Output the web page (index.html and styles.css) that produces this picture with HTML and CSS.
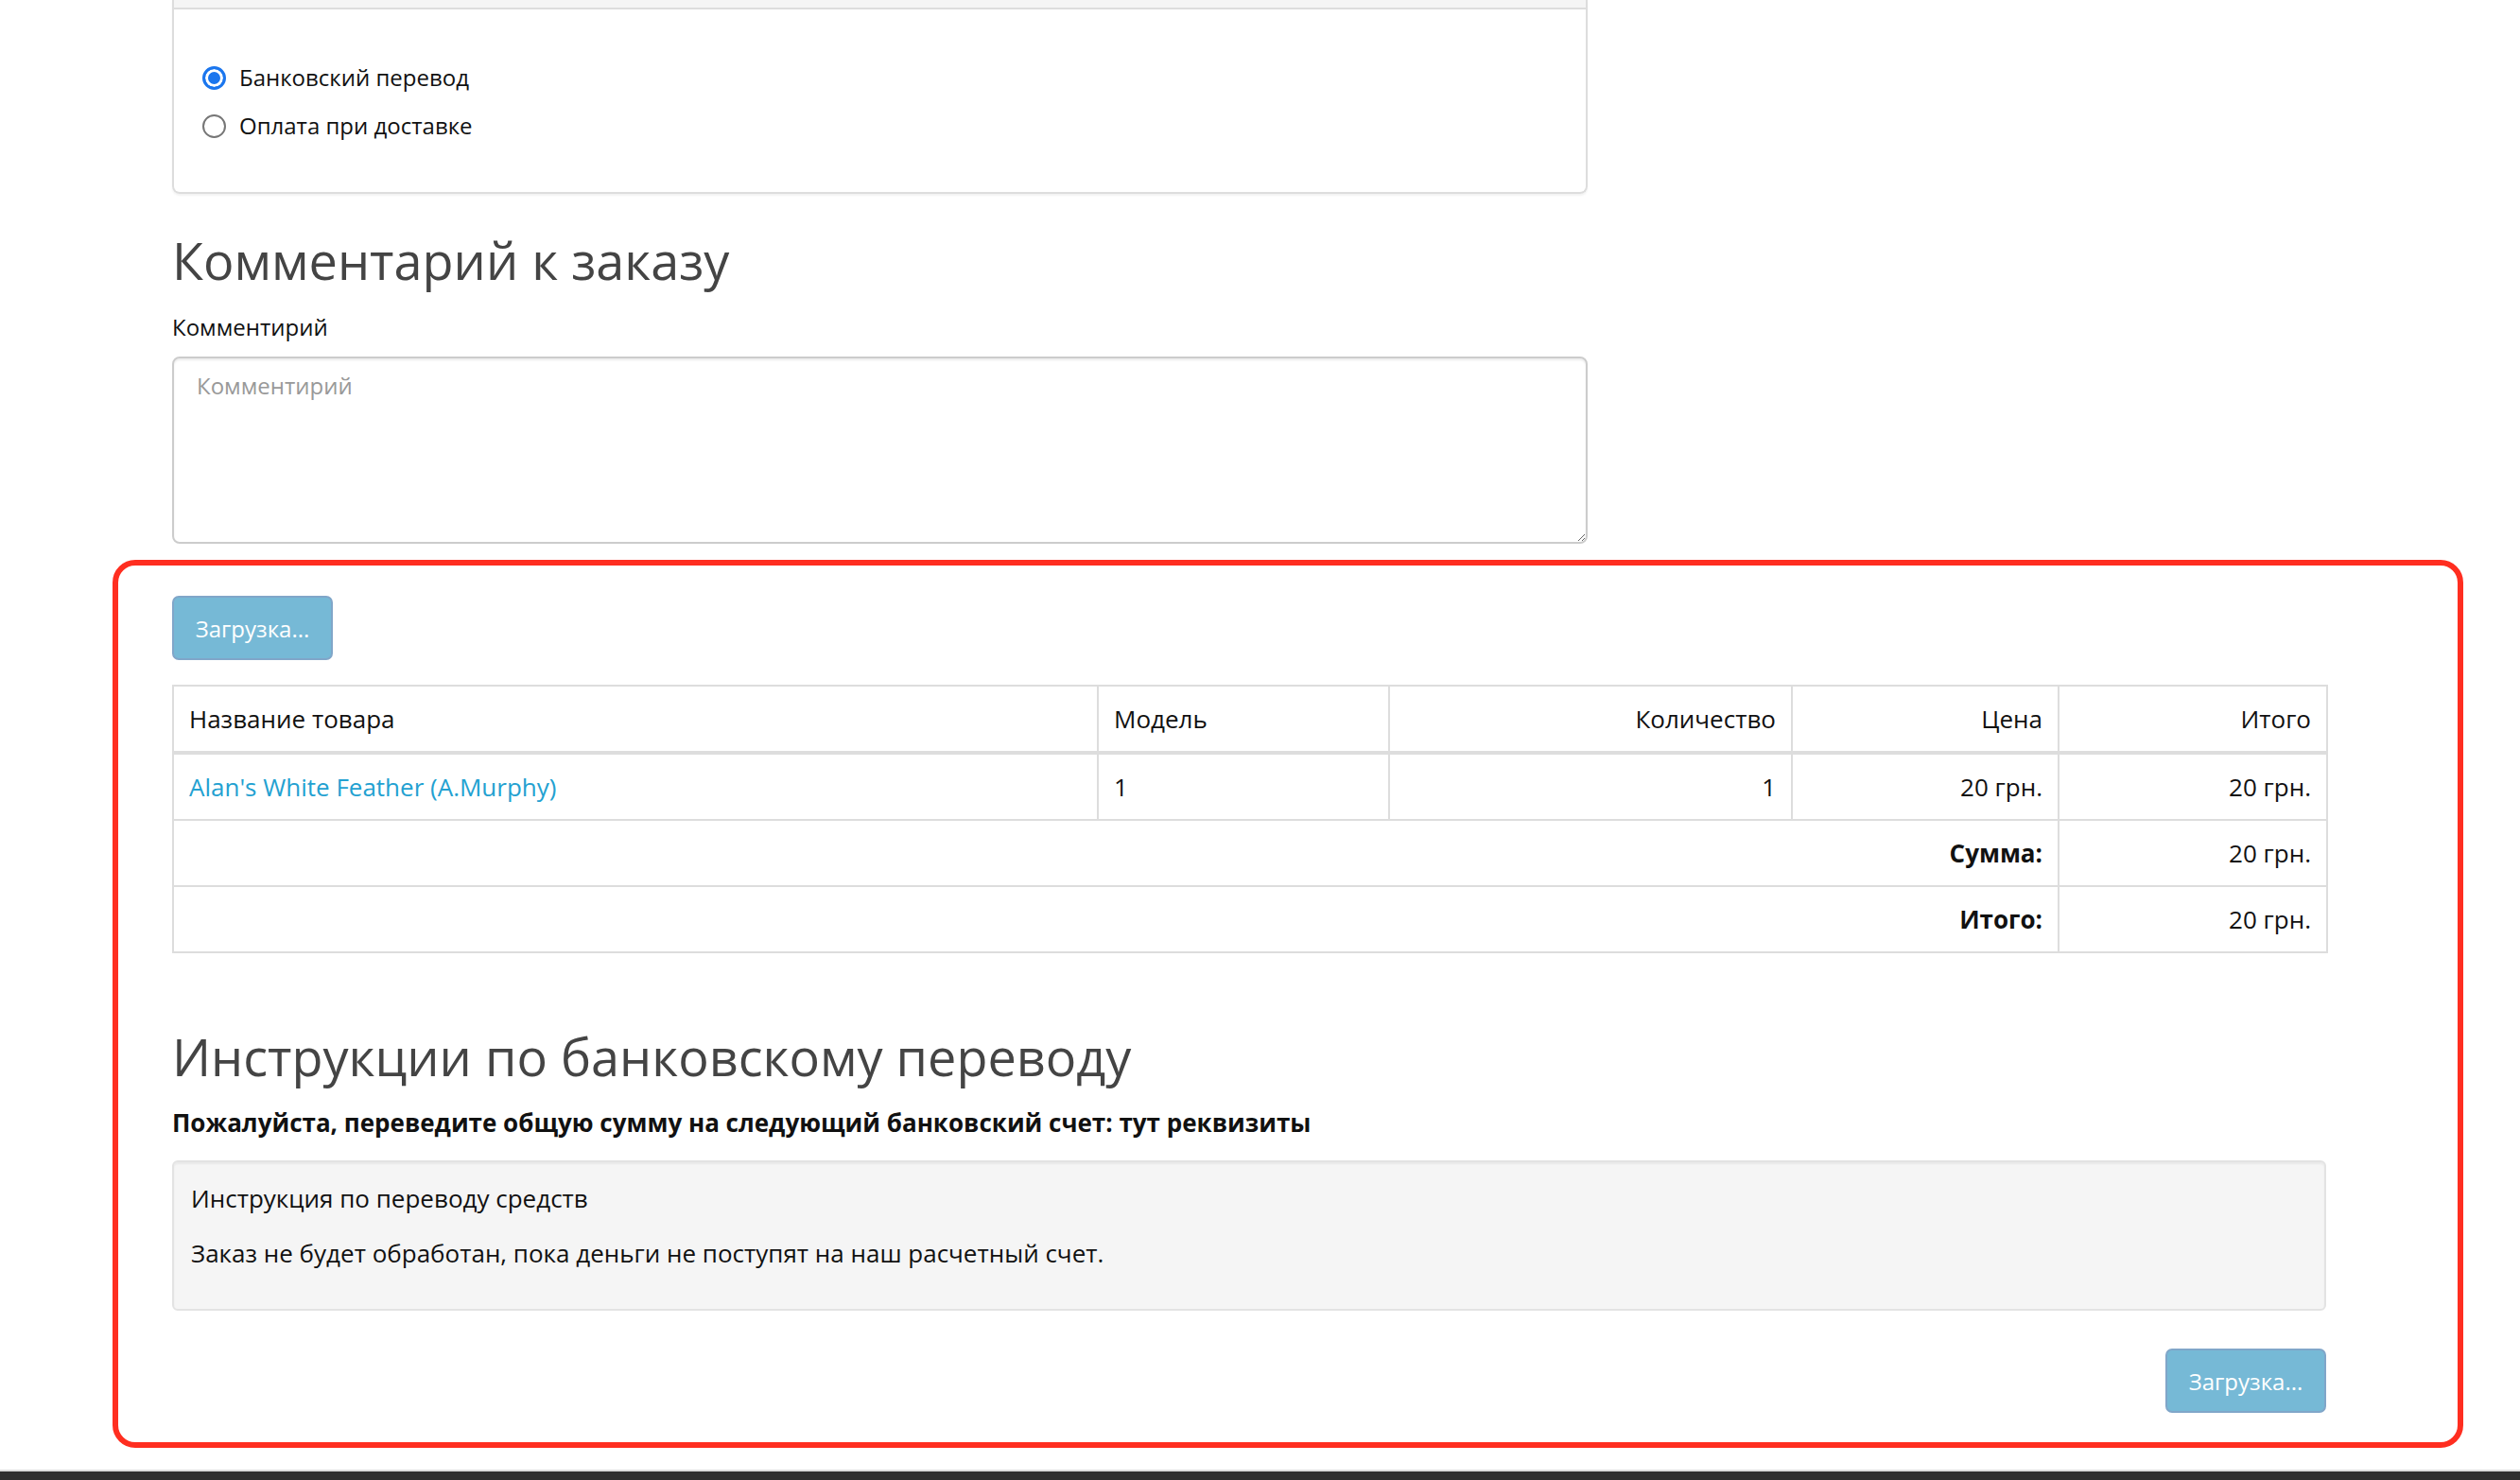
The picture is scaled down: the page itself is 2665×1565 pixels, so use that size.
FILE: index.html
```html
<!DOCTYPE html>
<html lang="ru">
<head>
    <meta charset="UTF-8">
    <meta name="viewport" content="width=device-width, initial-scale=1.0">
    <title>Оформление заказа</title>
<link rel="stylesheet" href="styles.css">
</head>

<body>
    <div class="container">
        <div class="panel">
            <div class="panel-heading"></div>
            <div class="panel-body">
                <label class="radio">
                    <input type="radio" name="payment_method" value="bank_transfer" checked>
                    Банковский перевод
                </label>
                <label class="radio">
                    <input type="radio" name="payment_method" value="cod">
                    Оплата при доставке
                </label>
            </div>
        </div>

        <h2>Комментарий к заказу</h2>
        <label class="control-label" for="input-comment">Комментирий</label>
        <textarea id="input-comment" class="form-control" placeholder="Комментирий"></textarea>
    </div>

    <div class="confirm-box">
        <div class="buttons">
            <button class="btn-load" disabled>Загрузка...</button>
        </div>

        <table class="cart-table">
            <colgroup>
                <col class="col-name">
                <col class="col-model">
                <col class="col-qty">
                <col class="col-price">
                <col class="col-total">
            </colgroup>
            <thead>
                <tr>
                    <th>Название товара</th>
                    <th>Модель</th>
                    <th class="text-right">Количество</th>
                    <th class="text-right">Цена</th>
                    <th class="text-right">Итого</th>
                </tr>
            </thead>
            <tbody>
                <tr>
                    <td><a href="#">Alan's White Feather (A.Murphy)</a></td>
                    <td>1</td>
                    <td class="text-right">1</td>
                    <td class="text-right">20 грн.</td>
                    <td class="text-right">20 грн.</td>
                </tr>
            </tbody>
            <tfoot>
                <tr>
                    <td colspan="4" class="text-right"><strong>Сумма:</strong></td>
                    <td class="text-right">20 грн.</td>
                </tr>
                <tr>
                    <td colspan="4" class="text-right"><strong>Итого:</strong></td>
                    <td class="text-right">20 грн.</td>
                </tr>
            </tfoot>
        </table>

        <h2 class="bank-title">Инструкции по банковскому переводу</h2>
        <p class="bank-note"><b>Пожалуйста, переведите общую сумму на следующий банковский счет: тут реквизиты</b></p>
        <div class="well">
            <p>Инструкция по переводу средств</p>
            <p>Заказ не будет обработан, пока деньги не поступят на наш расчетный счет.</p>
        </div>

        <div class="buttons buttons-right">
            <button class="btn-load" disabled>Загрузка...</button>
        </div>
    </div>

    <footer class="footer"></footer>
</body>
</html>
```

FILE: styles.css
```css
body {
    margin: 0;
    font-family: "Open Sans", "Liberation Sans", sans-serif;
    font-size: 24px;
    line-height: 34px;
    color: #111;
    background: #fff;
}
.container {
    margin-left: 182px;
    width: 1497px;
}
.panel {
    border: 2px solid #ddd;
    border-top: none;
    border-radius: 0 0 8px 8px;
    box-shadow: 0 2px 2px rgba(0, 0, 0, 0.05);
}
.panel-heading {
    height: 8px;
    background-color: #f5f5f5;
    border-bottom: 2px solid #ddd;
}
.panel-body {
    padding: 55px 30px 53px;
}
.radio {
    display: flex;
    align-items: center;
    height: 34px;
    gap: 14px;
}
.radio + .radio {
    margin-top: 17px;
}
.radio input {
    appearance: none;
    -webkit-appearance: none;
    margin: 0;
    width: 25px;
    height: 25px;
    border-radius: 50%;
    border: 2px solid #767676;
    background: #fff;
    box-sizing: border-box;
}
.radio input:checked {
    border: 3px solid #1b76ee;
    background: #1b76ee;
    box-shadow: inset 0 0 0 3px #fff;
}
h2 {
    font-size: 54px;
    line-height: 59px;
    font-weight: 400;
    color: #444;
    margin: 41px 0 24px;
}
.control-label {
    display: block;
    margin-bottom: 14px;
}
.form-control {
    display: block;
    box-sizing: border-box;
    width: 100%;
    height: 198px;
    padding: 12px 24px;
    font-family: inherit;
    font-size: 24px;
    line-height: 34px;
    color: #555;
    border: 2px solid #ccc;
    border-radius: 8px;
    box-shadow: inset 0 2px 2px rgba(0, 0, 0, 0.075);
    resize: vertical;
}
.form-control::placeholder {
    color: #999;
}
.confirm-box {
    margin: 17px 0 0 119px;
    width: 2486px;
    box-sizing: border-box;
    border: 6px solid #ff2e20;
    border-radius: 24px;
    padding: 32px 139px 31px 57px;
}
.buttons {
    display: flex;
}
.buttons-right {
    justify-content: flex-end;
    margin-top: 40px;
}
.btn-load {
    height: 68px;
    width: 170px;
    padding: 0;
    font-family: inherit;
    font-size: 24px;
    color: #fff;
    background-color: #76b9d6;
    border: 2px solid #80a6c9;
    border-radius: 7px;
    cursor: not-allowed;
}
.cart-table {
    margin-top: 26px;
    width: 2278px;
    table-layout: fixed;
    border-collapse: collapse;
    font-size: 26px;
    line-height: 36px;
    color: #111;
}
.col-name { width: 978px; }
.col-model { width: 308px; }
.col-qty { width: 426px; }
.col-price { width: 282px; }
.col-total { width: 284px; }
.cart-table th,
.cart-table td {
    border: 2px solid #ddd;
    padding: 16px;
    text-align: left;
    font-weight: 400;
}
.cart-table thead th {
    border-bottom-width: 4px;
}
.cart-table strong {
    font-weight: 700;
}
.cart-table .text-right {
    text-align: right;
}
.cart-table a {
    color: #23a1d1;
    text-decoration: none;
}
.bank-title {
    margin: 80px 0 22px;
}
.bank-note {
    margin: 0 0 21px;
    font-size: 26px;
    line-height: 37px;
    color: #111;
}
.well {
    background-color: #f5f5f5;
    border: 2px solid #e3e3e3;
    border-radius: 6px;
    box-shadow: inset 0 2px 2px rgba(0, 0, 0, 0.05);
    padding: 20px 18px 19px;
    font-size: 26px;
}
.well p {
    margin: 0 0 21px;
    line-height: 37px;
}
.footer {
    margin-top: 23px;
    height: 9px;
    background-color: #303030;
    border-top: 2px solid #ddd;
}
```
